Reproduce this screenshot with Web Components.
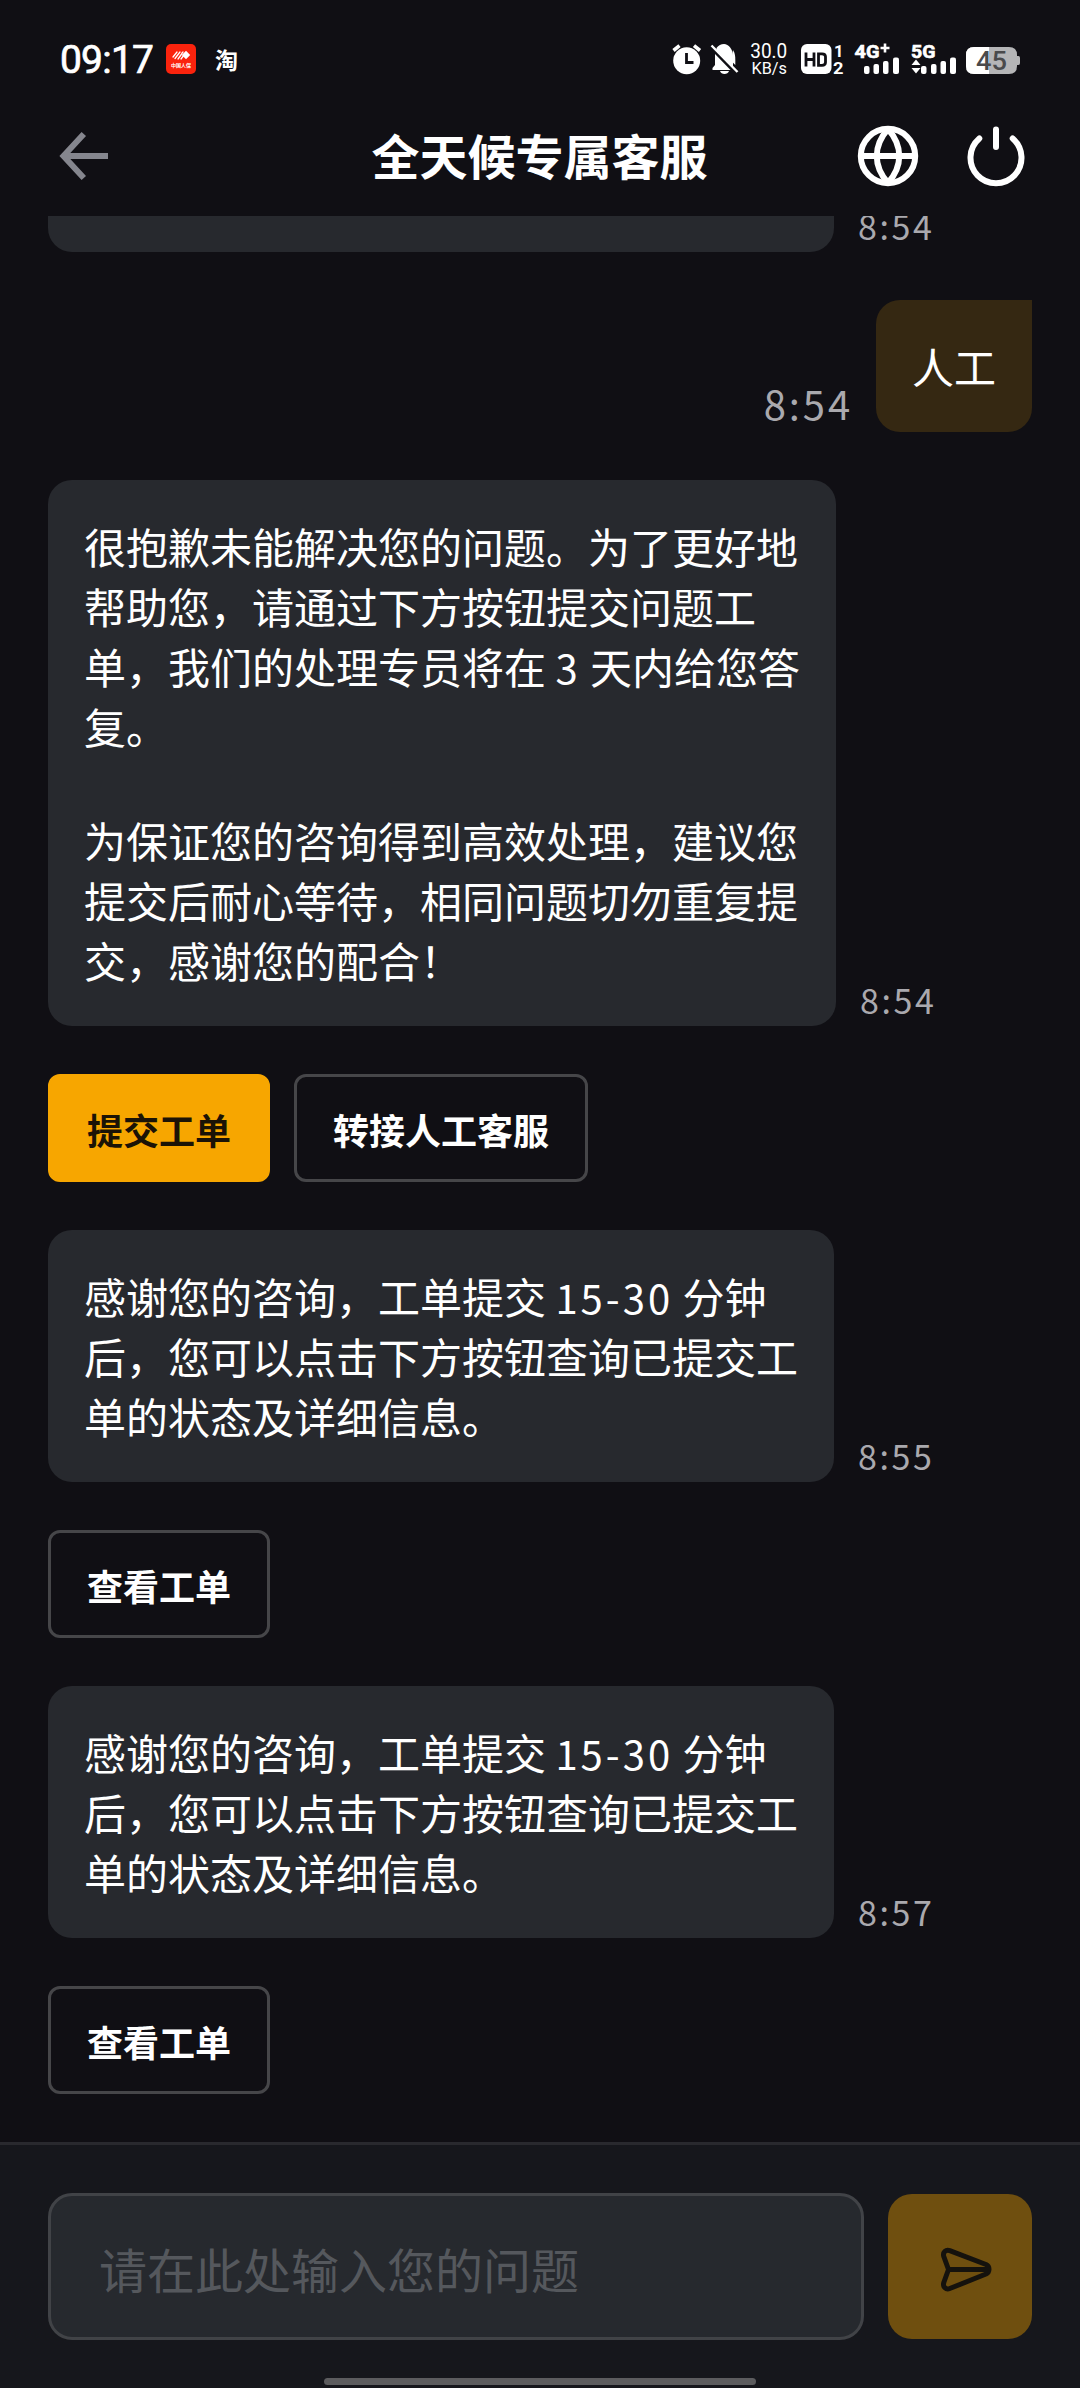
<!DOCTYPE html>
<html lang="zh-CN">
<head>
<meta charset="utf-8">
<title>全天候专属客服</title>
<style>
html,body{margin:0;background:#100f14}
body{width:1080px;height:2388px;overflow:hidden;color:#fff;font-family:"Noto Sans CJK SC",sans-serif}
</style>
</head>
<body>
<support-app></support-app>
<script>
const define=(name,css,html)=>customElements.define(name,class extends HTMLElement{
  constructor(){
    super();
    this.attachShadow({mode:'open'}).innerHTML='<style>*{box-sizing:border-box}svg{display:block;flex:none;overflow:visible}'+css+'</style>'+
      (typeof html==='function'?html(this):html);
  }
});

define('status-bar',`
:host{display:flex;height:96px;padding:42px 53px 0 60px;align-items:flex-start;justify-content:space-between;font-family:Roboto,sans-serif}
.side{display:flex;height:34px;align-items:center}
.clock{font-size:39px;line-height:36px;padding-top:2px;font-weight:400;-webkit-text-stroke:.7px #fff;letter-spacing:-.8px;width:91px;white-space:nowrap}
.app{margin-left:15px}
.tao{font:700 23px/34px "Noto Sans CJK SC",sans-serif;margin-left:19px}
`,`
<div class="side"><span class="clock">09:17</span>
<svg class="app" width="30" height="30" viewBox="0 0 30 30"><rect width="30" height="30" rx="5" fill="#fa230d"/>
<path d="M20 6.800l4.200 4.200-4.200 4.200-4.200-4.200z" fill="#fff"/><path d="M7 13l4-5M9 14.500l5-6.500M12 15l4-5.500M15 15l3-4M17 8l-1 1" stroke="#fff" stroke-width="1.300" stroke-linecap="round"/>
<text x="15" y="22.500" text-anchor="middle" font-family="Noto Sans CJK SC" font-size="5" font-weight="700" fill="#fff">中国人保</text></svg>
<span class="tao">淘</span></div>
<svg width="358" height="34" viewBox="669 42 358 34" fill="#fff" font-family="Roboto">
<circle cx="686.700" cy="60.700" r="13.500"/><path d="M673.500 50.500l6-4.800M700 50.500l-6-4.800" stroke="#fff" stroke-width="3.600"/><path d="M686.500 53v9.500h7" fill="none" stroke="#100f14" stroke-width="2.800"/>
<path d="M716.500 51L733 67.500V56c0-7-4.500-12-9-12-3 0-5.500 1.500-7.500 4zM715 54l15.500 16h-18v-2l2.500-3zM720 71h9c-1 4-8 4-9 0z"/><path d="M733 50c2 3 2.300 6 2.300 10v5l-4-4z"/><path d="M711.500 45.500l26 26.500" stroke="#fff" stroke-width="2.400"/>
<text x="750.300" y="58.300" font-size="19.500" textLength="37" lengthAdjust="spacingAndGlyphs">30.0</text>
<text x="751.500" y="73.600" font-size="16" textLength="35.500" lengthAdjust="spacingAndGlyphs">KB/s</text>
<rect x="801" y="44" width="30.500" height="30" rx="6"/><path d="M806 52.500v14M814 52.500v14M806 59.500h8M818.500 53.800h3.500q3.500 0 3.500 3v5.500q0 3-3.500 3h-3.500z" stroke="#100f14" stroke-width="2.800" fill="none"/>
<text x="834" y="57" font-size="16.500" font-weight="700">1</text><text x="833" y="73.600" font-size="17" font-weight="700" textLength="10.500" lengthAdjust="spacingAndGlyphs">2</text>
<g stroke="#fff" stroke-width=".6"><text x="854.500" y="57.500" font-size="19" font-weight="700" textLength="25" lengthAdjust="spacingAndGlyphs">4G</text><text x="911" y="57.500" font-size="19" font-weight="700" textLength="24.500" lengthAdjust="spacingAndGlyphs">5G</text></g><path d="M885 43.500v9M880.500 48h9" stroke="#fff" stroke-width="2.600"/>
<rect x="864" y="66" width="5.500" height="8" rx="2"/><rect x="873.500" y="64" width="5.500" height="10" rx="2"/><rect x="883" y="61" width="5.500" height="13" rx="2"/><rect x="893" y="57.500" width="6" height="16.500" rx="2"/>
<path d="M911.500 65l4.500-5.500 4.500 5.500zM911.500 68h9l-4.500 5.500z"/>
<rect x="921" y="66" width="5.500" height="8" rx="2"/><rect x="931" y="64" width="5.500" height="10" rx="2"/><rect x="940.500" y="61" width="5.500" height="13" rx="2"/><rect x="950" y="57.500" width="6" height="16.500" rx="2"/>
<path d="M974 47h35q8 0 8 8v11q0 8-8 8h-35q-8 0-8-8V55q0-8 8-8z" fill="#b5b5b7"/><path d="M1017 56h1.500q1.500 0 1.500 2v5q0 2-1.500 2h-1.500z" fill="#b5b5b7"/><path d="M989 47h-15q-8 0-8 8v11q0 8 8 8h15z"/>
<text x="976" y="69.500" font-size="25.500" font-weight="500" fill="#4a4a4c" textLength="31" lengthAdjust="spacingAndGlyphs">45</text>
</svg>`);

define('title-bar',`
:host{display:grid;grid-template-columns:1fr auto 1fr;height:120px;padding:0 51px 0 54px;align-items:center}
h1{margin:0 2px 0 -2px;padding-bottom:5px;font-size:48px;line-height:60px;font-weight:700}
.end{display:flex;justify-content:flex-end;gap:42px}
`,`
<svg width="60" height="60" viewBox="54 126 60 60" fill="none" stroke="#85868e" stroke-width="6"><path d="M108 156H65M83.800 134L63.500 156l20.300 22"/></svg>
<h1>全天候专属客服</h1>
<div class="end">
<svg width="66" height="66" viewBox="855 123 66 66" fill="none" stroke="#fff" stroke-width="6"><circle cx="888" cy="156" r="27.200"/><path d="M861 156h54M888 129c-15 17-15 37 0 54M888 129c15 17 15 37 0 54"/></svg>
<svg width="66" height="66" viewBox="963 123 66 66" fill="none" stroke="#fff" stroke-width="6" stroke-linecap="round"><path d="M996 129.500v17.500M979.300 138.500a25.500 25.500 0 1 0 33.400 0"/></svg>
</div>`);

define('chat-message',`
:host{display:flex;align-items:flex-end;gap:24px}
:host([own]){flex-direction:row-reverse}
.bubble{padding:36px;border-radius:24px;background:#27292e;font-size:42px;line-height:60px;white-space:nowrap}
:host([own]) .bubble{background:#352812;border-top-right-radius:0}
:host([cut]) .bubble{width:786px;height:36px;padding:0;border-radius:0 0 24px 24px}
time{font-size:34px;line-height:52px;letter-spacing:2.600px;color:#aaa9ae}
:host([own]) time{font-size:40px;line-height:58px;letter-spacing:2.900px;margin-right:-1px}
`,el=>`<div class="bubble"><slot></slot></div><time>${el.getAttribute('time')}</time>`);

define('text-block',`:host{display:block}:host([spaced]){margin-top:54px}`,`<slot></slot>`);
define('plex-num',`:host{display:inline;font-size:40px;line-height:1;letter-spacing:3px}`,`<slot></slot>`);

define('action-row',`:host{display:flex;gap:24px}`,`<slot></slot>`);
define('action-button',`
:host{display:block}
button{display:block;height:108px;padding:2px 36px 0;border:3px solid #464649;border-radius:12px;background:none;color:#fff;font:700 36px/54px "Noto Sans CJK SC",sans-serif}
:host([primary]) button{background:#f7a600;border-color:#f7a600;color:#1b1306}
`,`<button><slot></slot></button>`);

define('chat-list',`
:host{display:flex;flex-direction:column;justify-content:flex-end;height:1926px;box-sizing:border-box;padding:0 48px 48px;gap:48px;overflow:hidden}
`,`<slot></slot>`);

define('chat-composer',`
:host{display:flex;flex-direction:column;align-items:center;height:246px;box-sizing:border-box;border-top:3px solid #29292e;background:#16171c}
.row{display:flex;gap:24px;padding:48px 48px 0;width:100%;align-items:center}
.field{width:816px;height:147px;border:3px solid #414347;border-radius:24px;background:#26292e;padding:4px 48px 0;font-size:48px;line-height:136px;color:#55585d}
.send{width:144px;height:145px;border:0;border-radius:24px;background:#6f4f0f;padding:0}
.home{width:432px;height:7px;border-radius:4px;background:#5c5c5e;margin-top:38px}
`,`
<div class="row"><div class="field">请在此处输入您的问题</div>
<button class="send" aria-label="发送"><svg width="144" height="144" viewBox="888 2194 144 144" fill="none" stroke="#15120d" stroke-width="5" stroke-linejoin="round"><path d="M949.800 2249.700L986 2263.500C990 2265.500 990 2271 986 2273L949.800 2287.500C946 2289 942.500 2286 943.800 2281.500L948.500 2268.500L943.800 2255.500C942.500 2251 946 2248.300 949.800 2249.700ZM948.500 2268.500H988"/></svg></button></div>
<div class="home"></div>`);

define('support-app',`:host{display:block;height:2388px}status-bar,title-bar{box-sizing:border-box}`,`
<status-bar></status-bar>
<title-bar></title-bar>
<chat-list>
<chat-message cut time="8:54"></chat-message>
<chat-message own time="8:54">人工</chat-message>
<chat-message time="8:54"><text-block>很抱歉未能解决您的问题。为了更好地<br>帮助您，请通过下方按钮提交问题工<br>单，我们的处理专员将在 <plex-num>3</plex-num> 天内给您答<br>复。</text-block><text-block spaced>为保证您的咨询得到高效处理，建议您<br>提交后耐心等待，相同问题切勿重复提<br>交，感谢您的配合！</text-block></chat-message>
<action-row><action-button primary>提交工单</action-button><action-button>转接人工客服</action-button></action-row>
<chat-message time="8:55">感谢您的咨询，工单提交 <plex-num>15-30</plex-num> 分钟<br>后，您可以点击下方按钮查询已提交工<br>单的状态及详细信息。</chat-message>
<action-row><action-button>查看工单</action-button></action-row>
<chat-message time="8:57">感谢您的咨询，工单提交 <plex-num>15-30</plex-num> 分钟<br>后，您可以点击下方按钮查询已提交工<br>单的状态及详细信息。</chat-message>
<action-row><action-button>查看工单</action-button></action-row>
</chat-list>
<chat-composer></chat-composer>`);
</script>
</body>
</html>
